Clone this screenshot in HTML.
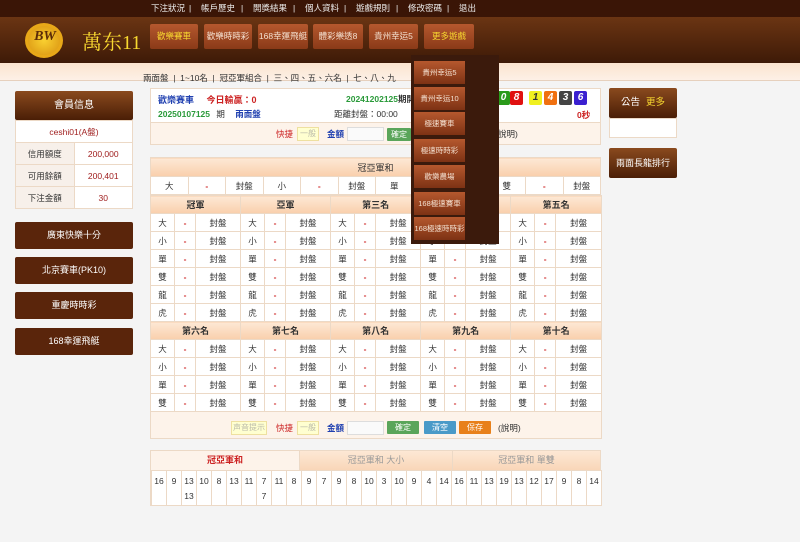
<!DOCTYPE html>
<html><head><meta charset="utf-8"><style>
*{margin:0;padding:0;box-sizing:border-box}
body{width:800px;height:542px;overflow:hidden;background:#f4f4f4;font-family:"Liberation Sans","Noto Sans CJK TC",sans-serif;font-size:9px;color:#333;position:relative}
.a{position:absolute}
#top{left:0;top:0;width:800px;height:17px;background:#3a1506;color:#eee;font-size:8.5px;line-height:17px}
#top span{position:absolute;top:0}
#hd{left:0;top:17px;width:800px;height:46px;background:linear-gradient(#6b3513,#3e1a07)}
.nb{top:7px;height:25px;background:linear-gradient(#b5582e,#8a3a18);color:#f4e0d0;font-size:8.5px;line-height:25px;text-align:center;border-radius:2px}
#sub{left:0;top:63px;width:800px;height:18px;background:linear-gradient(#fbe4cf,#fdf0e6);border-bottom:1px solid #e6d0bd}
.brown{background:linear-gradient(#8a4a1e,#4a1e06);color:#fff;text-align:center;border-radius:2px}
table{border-collapse:collapse;table-layout:fixed}
td{border:1px solid #ecd9c6;text-align:center;height:18px;background:#fff;font-size:8.5px;padding:0}
.th td,td.th{background:linear-gradient(#fde8d5,#f9cfac);font-weight:bold;color:#333;font-size:9px}
.d{color:#c22;font-weight:bold}
#dd{left:411px;top:55px;width:88px;height:189px;background:#3b1a0c}
.di{left:3px;width:51px;height:23px;background:linear-gradient(#b5582e,#7d3214);color:#f4e0d0;font-size:7.5px;line-height:23px;text-align:center;white-space:nowrap;overflow:hidden}
.ball{top:91px;width:13px;height:14px;color:#fff;font-size:10px;font-style:italic;font-weight:bold;text-align:center;line-height:14px;border-radius:2px}
.btn{height:13px;line-height:13px;color:#fff;font-size:8px;text-align:center;border-radius:1px}
#nums td{padding-top:3px;vertical-align:top;line-height:15px}
</style></head><body>
<div id="top" class="a">
<span style="left:151px">下注狀況</span><span style="left:189px">|</span>
<span style="left:201px">帳戶歷史</span><span style="left:241px">|</span>
<span style="left:253px">開獎結果</span><span style="left:293px">|</span>
<span style="left:305px">個人資料</span><span style="left:344px">|</span>
<span style="left:356px">遊戲規則</span><span style="left:396px">|</span>
<span style="left:408px">修改密碼</span><span style="left:447px">|</span>
<span style="left:459px">退出</span>
</div>
<div id="hd" class="a">
<div class="a" style="left:25px;top:6px;width:38px;height:35px;border-radius:50%;background:radial-gradient(#f9d030,#d89010);border:3px solid #e8a818"></div>
<div class="a" style="left:29px;top:12px;width:32px;font:bold 14px 'Liberation Serif',serif;color:#5a2a08;text-align:center;font-style:italic">BW</div>
<div class="a" style="left:82px;top:9px;font:20px 'Liberation Serif','Noto Serif CJK SC',serif;color:#f8d830">萬东11</div>
<div class="a nb" style="left:150px;width:48px;color:#f8d830">歡樂賽車</div>
<div class="a nb" style="left:204px;width:48px">歡樂時時彩</div>
<div class="a nb" style="left:258px;width:50px">168幸運飛艇</div>
<div class="a nb" style="left:313px;width:50px">體彩樂透8</div>
<div class="a nb" style="left:369px;width:49px">貴州幸运5</div>
<div class="a nb" style="left:424px;width:50px;color:#f8d830">更多遊戲</div>
</div>
<div id="sub" class="a"><div class="a" style="left:143px;top:9px;font-size:8.5px;white-space:nowrap;color:#333">兩面盤 &nbsp;|&nbsp; 1~10名 &nbsp;|&nbsp; 冠亞軍組合 &nbsp;|&nbsp; 三、四、五、六名 &nbsp;|&nbsp; 七、八、九</div></div>

<div class="a brown" style="left:15px;top:91px;width:118px;height:29px;line-height:29px;font-size:10px">會員信息</div>
<table class="a" style="left:15px;top:120px;width:118px">
<tr><td colspan="2" style="height:22px;color:#a02020">ceshi01(A盤)</td></tr>
<tr><td style="width:52px;height:22px;background:#f7f0ea">信用額度</td><td style="color:#a02020">200,000</td></tr>
<tr><td style="height:22px;background:#f7f0ea">可用餘額</td><td style="color:#a02020">200,401</td></tr>
<tr><td style="height:22px;background:#f7f0ea">下注金額</td><td style="color:#a02020">30</td></tr>
</table>
<div class="a brown" style="left:15px;top:222px;width:118px;height:27px;line-height:27px;background:#5a250b">廣東快樂十分</div>
<div class="a brown" style="left:15px;top:257px;width:118px;height:27px;line-height:27px;background:#5a250b">北京賽車(PK10)</div>
<div class="a brown" style="left:15px;top:292px;width:118px;height:27px;line-height:27px;background:#5a250b">重慶時時彩</div>
<div class="a brown" style="left:15px;top:328px;width:118px;height:27px;line-height:27px;background:#5a250b">168幸運飛艇</div>

<div class="a brown" style="left:609px;top:88px;width:68px;height:30px;line-height:30px;text-align:left;padding-left:12px;font-size:9.5px">公告<span style="position:absolute;right:12px;color:#f8d830">更多</span></div>
<div class="a" style="left:609px;top:118px;width:68px;height:20px;background:#fff;border:1px solid #ecd9c6"></div>
<div class="a brown" style="left:609px;top:148px;width:68px;height:30px;line-height:30px;font-size:9px">兩面長龍排行</div>

<div class="a" style="left:150px;top:88px;width:451px;height:57px;background:#fdf3ea;border:1px solid #ecd9c6"></div>
<div class="a" style="left:151px;top:89px;width:449px;height:34px;background:#fff;border-bottom:1px solid #ecd9c6"></div>
<div class="a" style="left:158px;top:93px;font-weight:bold;color:#2040b0;font-size:9px">歡樂賽車 <span style="color:#c22;margin-left:10px">今日輸贏：0</span></div>
<div class="a" style="left:158px;top:108px;font-weight:bold;color:#2a9a3a;font-size:8.5px">20250107125 <span style="color:#333;font-weight:normal;margin-left:4px">期</span> <span style="color:#2040b0;margin-left:8px">兩面盤</span></div>
<div class="a" style="left:346px;top:93px;font-weight:bold;color:#2a9a3a;font-size:8.5px">20241202125<span style="color:#333">期開</span></div>
<div class="a" style="left:334px;top:108px;font-size:8.5px">距離封盤：00:00</div>
<div class="a ball" style="left:497px;background:#2a9a1a">0</div>
<div class="a ball" style="left:510px;background:#e01010">8</div>
<div class="a ball" style="left:529px;background:#f0f020;color:#333">1</div>
<div class="a ball" style="left:544px;background:#f07010">4</div>
<div class="a ball" style="left:559px;background:#444">3</div>
<div class="a ball" style="left:574px;background:#3a20d0">6</div>
<div class="a" style="left:577px;top:109px;color:#c22;font-weight:bold;font-size:8.5px">0秒</div>
<div class="a" style="left:276px;top:128px;color:#c22;font-size:8.5px">快捷</div>
<div class="a" style="left:297px;top:127px;width:22px;height:14px;background:#ffffd0;border:1px solid #eee0a0;color:#bba;font-size:8px;text-align:center;line-height:12px">一般</div>
<div class="a" style="left:327px;top:128px;color:#2040b0;font-weight:bold;font-size:8.5px">金額</div>
<div class="a" style="left:347px;top:127px;width:37px;height:14px;background:#fafafa;border:1px solid #ddd"></div>
<div class="a btn" style="left:387px;top:128px;width:24px;background:#5aa55a">確定</div>
<div class="a" style="left:498px;top:128px;font-size:8.5px">說明)</div>

<table class="a" style="left:150px;top:157px;width:451px">
<tr class="th"><td colspan="12" style="height:19px;font-weight:normal">冠亞軍和</td></tr>
<tr><td>大</td><td class="d">-</td><td>封盤</td><td>小</td><td class="d">-</td><td>封盤</td><td>單</td><td class="d">-</td><td>封盤</td><td>雙</td><td class="d">-</td><td>封盤</td></tr>
</table>
<table class="a" style="left:150px;top:195px;width:451px">
<colgroup><col style="width:24px"><col style="width:21px"><col style="width:45px"><col style="width:24px"><col style="width:21px"><col style="width:45px"><col style="width:24px"><col style="width:21px"><col style="width:45px"><col style="width:24px"><col style="width:21px"><col style="width:45px"><col style="width:24px"><col style="width:21px"><col style="width:46px"></colgroup>
<tr class="th"><td colspan="3">冠軍</td><td colspan="3">亞軍</td><td colspan="3">第三名</td><td colspan="3">第四名</td><td colspan="3">第五名</td></tr>
<tr><td>大</td><td class="d">-</td><td>封盤</td><td>大</td><td class="d">-</td><td>封盤</td><td>大</td><td class="d">-</td><td>封盤</td><td>大</td><td class="d">-</td><td>封盤</td><td>大</td><td class="d">-</td><td>封盤</td></tr>
<tr><td>小</td><td class="d">-</td><td>封盤</td><td>小</td><td class="d">-</td><td>封盤</td><td>小</td><td class="d">-</td><td>封盤</td><td>小</td><td class="d">-</td><td>封盤</td><td>小</td><td class="d">-</td><td>封盤</td></tr>
<tr><td>單</td><td class="d">-</td><td>封盤</td><td>單</td><td class="d">-</td><td>封盤</td><td>單</td><td class="d">-</td><td>封盤</td><td>單</td><td class="d">-</td><td>封盤</td><td>單</td><td class="d">-</td><td>封盤</td></tr>
<tr><td>雙</td><td class="d">-</td><td>封盤</td><td>雙</td><td class="d">-</td><td>封盤</td><td>雙</td><td class="d">-</td><td>封盤</td><td>雙</td><td class="d">-</td><td>封盤</td><td>雙</td><td class="d">-</td><td>封盤</td></tr>
<tr><td>龍</td><td class="d">-</td><td>封盤</td><td>龍</td><td class="d">-</td><td>封盤</td><td>龍</td><td class="d">-</td><td>封盤</td><td>龍</td><td class="d">-</td><td>封盤</td><td>龍</td><td class="d">-</td><td>封盤</td></tr>
<tr><td>虎</td><td class="d">-</td><td>封盤</td><td>虎</td><td class="d">-</td><td>封盤</td><td>虎</td><td class="d">-</td><td>封盤</td><td>虎</td><td class="d">-</td><td>封盤</td><td>虎</td><td class="d">-</td><td>封盤</td></tr>
<tr class="th"><td colspan="3">第六名</td><td colspan="3">第七名</td><td colspan="3">第八名</td><td colspan="3">第九名</td><td colspan="3">第十名</td></tr>
<tr><td>大</td><td class="d">-</td><td>封盤</td><td>大</td><td class="d">-</td><td>封盤</td><td>大</td><td class="d">-</td><td>封盤</td><td>大</td><td class="d">-</td><td>封盤</td><td>大</td><td class="d">-</td><td>封盤</td></tr>
<tr><td>小</td><td class="d">-</td><td>封盤</td><td>小</td><td class="d">-</td><td>封盤</td><td>小</td><td class="d">-</td><td>封盤</td><td>小</td><td class="d">-</td><td>封盤</td><td>小</td><td class="d">-</td><td>封盤</td></tr>
<tr><td>單</td><td class="d">-</td><td>封盤</td><td>單</td><td class="d">-</td><td>封盤</td><td>單</td><td class="d">-</td><td>封盤</td><td>單</td><td class="d">-</td><td>封盤</td><td>單</td><td class="d">-</td><td>封盤</td></tr>
<tr><td>雙</td><td class="d">-</td><td>封盤</td><td>雙</td><td class="d">-</td><td>封盤</td><td>雙</td><td class="d">-</td><td>封盤</td><td>雙</td><td class="d">-</td><td>封盤</td><td>雙</td><td class="d">-</td><td>封盤</td></tr>
<tr><td colspan="15" style="height:27px;background:#fdf3ea"></td></tr>
</table>
<div class="a" style="left:231px;top:421px;width:36px;height:14px;background:#ffffd0;border:1px solid #eee0a0;color:#bba;font-size:8px;text-align:center;line-height:12px">声音提示</div>
<div class="a" style="left:276px;top:422px;color:#c22;font-size:8.5px">快捷</div>
<div class="a" style="left:297px;top:421px;width:22px;height:14px;background:#ffffd0;border:1px solid #eee0a0;color:#bba;font-size:8px;text-align:center;line-height:12px">一般</div>
<div class="a" style="left:327px;top:422px;color:#2040b0;font-weight:bold;font-size:8.5px">金額</div>
<div class="a" style="left:347px;top:421px;width:37px;height:14px;background:#fafafa;border:1px solid #ddd"></div>
<div class="a btn" style="left:387px;top:421px;width:32px;background:#5aa55a">確定</div>
<div class="a btn" style="left:424px;top:421px;width:32px;background:#4a9ac8">清空</div>
<div class="a btn" style="left:459px;top:421px;width:32px;background:#e8801a">保存</div>
<div class="a" style="left:498px;top:422px;font-size:8.5px">(說明)</div>

<div class="a" style="left:150px;top:450px;width:451px;height:56px;background:#fff;border:1px solid #ecd9c6"></div>
<div class="a" style="left:151px;top:451px;width:148px;height:19px;background:#fdf3ea;color:#c22;font-weight:bold;text-align:center;line-height:19px">冠亞軍和</div>
<div class="a" style="left:299px;top:451px;width:153px;height:19px;background:linear-gradient(#fde8d5,#f9d6b8);color:#999;text-align:center;line-height:19px;border-left:1px solid #ecd9c6">冠亞軍和 大小</div>
<div class="a" style="left:452px;top:451px;width:148px;height:19px;background:linear-gradient(#fde8d5,#f9d6b8);color:#999;text-align:center;line-height:19px;border-left:1px solid #ecd9c6">冠亞軍和 單雙</div>
<table id="nums" class="a" style="left:151px;top:470px;width:450px">
<colgroup><col span="30" style="width:15px"></colgroup>
<tr>
<td style="height:35px">16</td><td>9</td><td>13<br>13</td><td>10</td><td>8</td><td>13</td><td>11</td><td>7<br>7</td><td>11</td><td>8</td><td>9</td><td>7</td><td>9</td><td>8</td><td>10</td><td>3</td><td>10</td><td>9</td><td>4</td><td>14</td><td>16</td><td>11</td><td>13</td><td>19</td><td>13</td><td>12</td><td>17</td><td>9</td><td>8</td><td>14</td>
</tr></table>

<div id="dd" class="a">
<div class="a di" style="top:6px">貴州幸运5</div>
<div class="a di" style="top:32px">貴州幸运10</div>
<div class="a di" style="top:57px">極速賽車</div>
<div class="a di" style="top:84px">極速時時彩</div>
<div class="a di" style="top:110px">歡樂農場</div>
<div class="a di" style="top:137px">168極速賽車</div>
<div class="a di" style="top:162px">168極速時時彩</div>
</div>
</body></html>
